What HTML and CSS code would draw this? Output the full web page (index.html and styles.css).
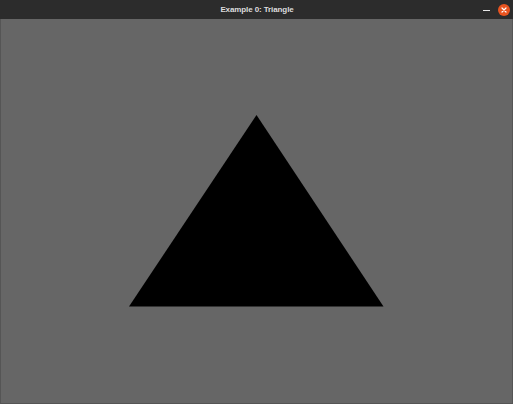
FILE: index.html
```html
<!DOCTYPE html>
<html>
<head>
<meta charset="utf-8">
<link rel="stylesheet" href="styles.css">
</head>
<body>
<div class="window">
  <div class="titlebar">
    <span class="title">Example 0: Triangle</span>
    <div class="controls">
      <span class="min"></span>
      <span class="close">
        <svg width="12" height="12" viewBox="0 0 12 12"><circle cx="6" cy="6" r="6" fill="#e95420"/><path d="M4 4 L8 8 M8 4 L4 8" stroke="#fff" stroke-width="1.2" stroke-linecap="round"/></svg>
      </span>
    </div>
  </div>
  <div class="content">
    <svg class="canvas" width="513" height="385" viewBox="0 0 513 385">
      <polygon points="256.5,96 129,287.5 383.5,287.5" fill="#000"/>
    </svg>
  </div>
</div>
</body>
</html>
```
FILE: styles.css
```css
html, body { margin: 0; padding: 0; background: #666666; }
.window { width: 513px; height: 404px; display: flex; flex-direction: column; box-sizing: border-box; border: 1px solid #555; border-top: none; }
.titlebar { height: 19px; background: #2c2c2c; position: relative; display: flex; align-items: center; justify-content: center; flex: none; margin: 0 -1px; }
.title { font-family: "Liberation Sans", sans-serif; font-weight: bold; font-size: 8px; color: #dcdcdc; letter-spacing: -0.1px; margin-left: 1px; }
.controls { position: absolute; right: 3px; top: 0; height: 19px; display: flex; align-items: center; gap: 8px; }
.min { width: 7px; height: 1.5px; background: #e8e8e8; display: block; margin-top: 2px; }
.close { display: block; width: 12px; height: 12px; }
.close svg { display: block; }
.content { flex: 1; background: #666666; overflow: hidden; }
.canvas { display: block; margin-left: -1px; }
```
